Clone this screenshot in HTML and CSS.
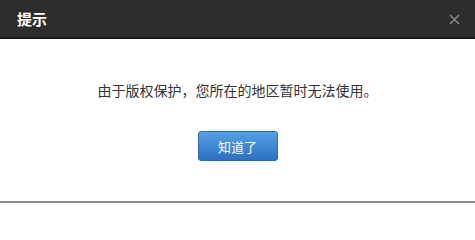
FILE: index.html
```html
<!DOCTYPE html>
<html lang="zh-CN">
<head>
<meta charset="utf-8">
<title>提示</title>
<link rel="stylesheet" href="styles.css">
</head>
<body>
<div class="dialog">
  <div class="dialog-header">
    <span class="dialog-title">提示</span>
    <span class="dialog-close" aria-label="关闭">
      <svg width="11" height="11" viewBox="0 0 11 11"><path d="M1 1 L10 10 M10 1 L1 10" stroke="#858585" stroke-width="1.5" fill="none"/></svg>
    </span>
  </div>
  <div class="dialog-body">
    <p class="dialog-message">由于版权保护，您所在的地区暂时无法使用。</p>
    <button class="dialog-btn" type="button">知道了</button>
  </div>
</div>
</body>
</html>
```
FILE: styles.css
```css
html, body {
  margin: 0;
  padding: 0;
  background: #ffffff;
}
body {
  font-family: "Noto Sans CJK SC", "Liberation Sans", sans-serif;
}
.dialog {
  width: 475px;
  height: 203px;
  display: flex;
  flex-direction: column;
  box-sizing: border-box;
  border-bottom: 2px solid #8c8c8c;
}
.dialog-header {
  height: 37px;
  background: #2d2d2d;
  border-bottom: 2px solid #1b1b1b;
  display: flex;
  align-items: center;
  justify-content: space-between;
  padding: 0 15px 0 17px;
}
.dialog-title {
  color: #ffffff;
  font-size: 15px;
  font-weight: bold;
  line-height: 20px;
}
.dialog-close {
  display: flex;
  width: 11px;
  height: 11px;
  margin-top: 2px;
}
.dialog-body {
  flex: 1;
  display: flex;
  flex-direction: column;
  align-items: center;
  padding-top: 41px;
}
.dialog-message {
  margin: 0;
  font-size: 14px;
  line-height: 20px;
  color: #333333;
}
.dialog-btn {
  margin-top: 31px;
  width: 80px;
  height: 30px;
  border: 1px solid #2a6abb;
  border-radius: 3px;
  background: linear-gradient(#55a0e6, #2b70c2);
  color: #ffffff;
  font-family: inherit;
  font-size: 13px;
  padding: 0;
}
```
